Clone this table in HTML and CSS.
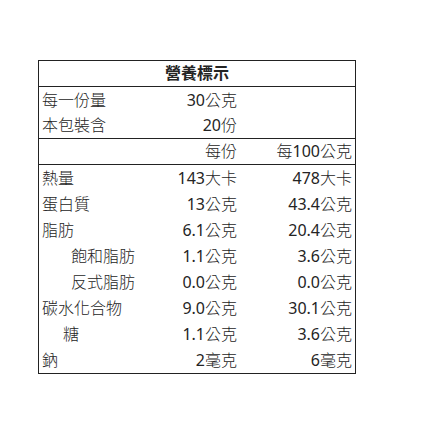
FILE: index.html
```html
<!DOCTYPE html>
<html lang="zh-Hant">
<head>
<meta charset="utf-8">
<title>營養標示</title>
<link rel="stylesheet" href="styles.css">
</head>
<body>
<div class="label">
  <div class="title">營養標示</div>
  <div class="section serving">
    <div class="row"><span class="name">每一份量</span><span class="val"><b class="num">30</b>公克</span><span class="val"></span></div>
    <div class="row short"><span class="name">本包裝含</span><span class="val"><b class="num">20</b>份</span><span class="val"></span></div>
  </div>
  <div class="section head">
    <div class="row"><span class="name"></span><span class="val">每份</span><span class="val">每<b class="num">100</b>公克</span></div>
  </div>
  <div class="data">
    <div class="row"><span class="name">熱量</span><span class="val"><b class="num">143</b>大卡</span><span class="val"><b class="num">478</b>大卡</span></div>
    <div class="row"><span class="name">蛋白質</span><span class="val"><b class="num">13</b>公克</span><span class="val"><b class="num">43.4</b>公克</span></div>
    <div class="row"><span class="name">脂肪</span><span class="val"><b class="num">6.1</b>公克</span><span class="val"><b class="num">20.4</b>公克</span></div>
    <div class="row"><span class="name sub">飽和脂肪</span><span class="val"><b class="num">1.1</b>公克</span><span class="val"><b class="num">3.6</b>公克</span></div>
    <div class="row"><span class="name sub">反式脂肪</span><span class="val"><b class="num">0.0</b>公克</span><span class="val"><b class="num">0.0</b>公克</span></div>
    <div class="row"><span class="name">碳水化合物</span><span class="val"><b class="num">9.0</b>公克</span><span class="val"><b class="num">30.1</b>公克</span></div>
    <div class="row"><span class="name sub2">糖</span><span class="val"><b class="num">1.1</b>公克</span><span class="val"><b class="num">3.6</b>公克</span></div>
    <div class="row"><span class="name">鈉</span><span class="val"><b class="num">2</b>毫克</span><span class="val"><b class="num">6</b>毫克</span></div>
  </div>
</div>
</body>
</html>
```
FILE: styles.css
```css
html, body {
  margin: 0;
  padding: 0;
  background: #ffffff;
}

body {
  font-family: "Noto Sans", "Noto Sans CJK TC", sans-serif;
  font-size: 16px;
  font-weight: 300;
  color: #242424;
}

.label {
  margin: 60px 0 0 38px;
  width: 318px;
  border: 1px solid #222222;
  box-sizing: border-box;
}

.title {
  height: 25px;
  line-height: 25px;
  text-align: center;
  font-weight: bold;
  border-bottom: 1px solid #222222;
}

.section {
  border-bottom: 1px solid #222222;
}

.row {
  display: grid;
  grid-template-columns: 121px 80px 115px;
  height: 26px;
  line-height: 26px;
  white-space: nowrap;
}

.serving .row.short {
  height: 25px;
  line-height: 25px;
}

.head .row {
  height: 25px;
  line-height: 25px;
}

.name {
  padding-left: 3px;
}

.name.sub {
  padding-left: 32px;
}

.name.sub2 {
  padding-left: 24px;
}

.val {
  text-align: right;
  padding-right: 3px;
}

.num {
  font-weight: 400;
}
```
